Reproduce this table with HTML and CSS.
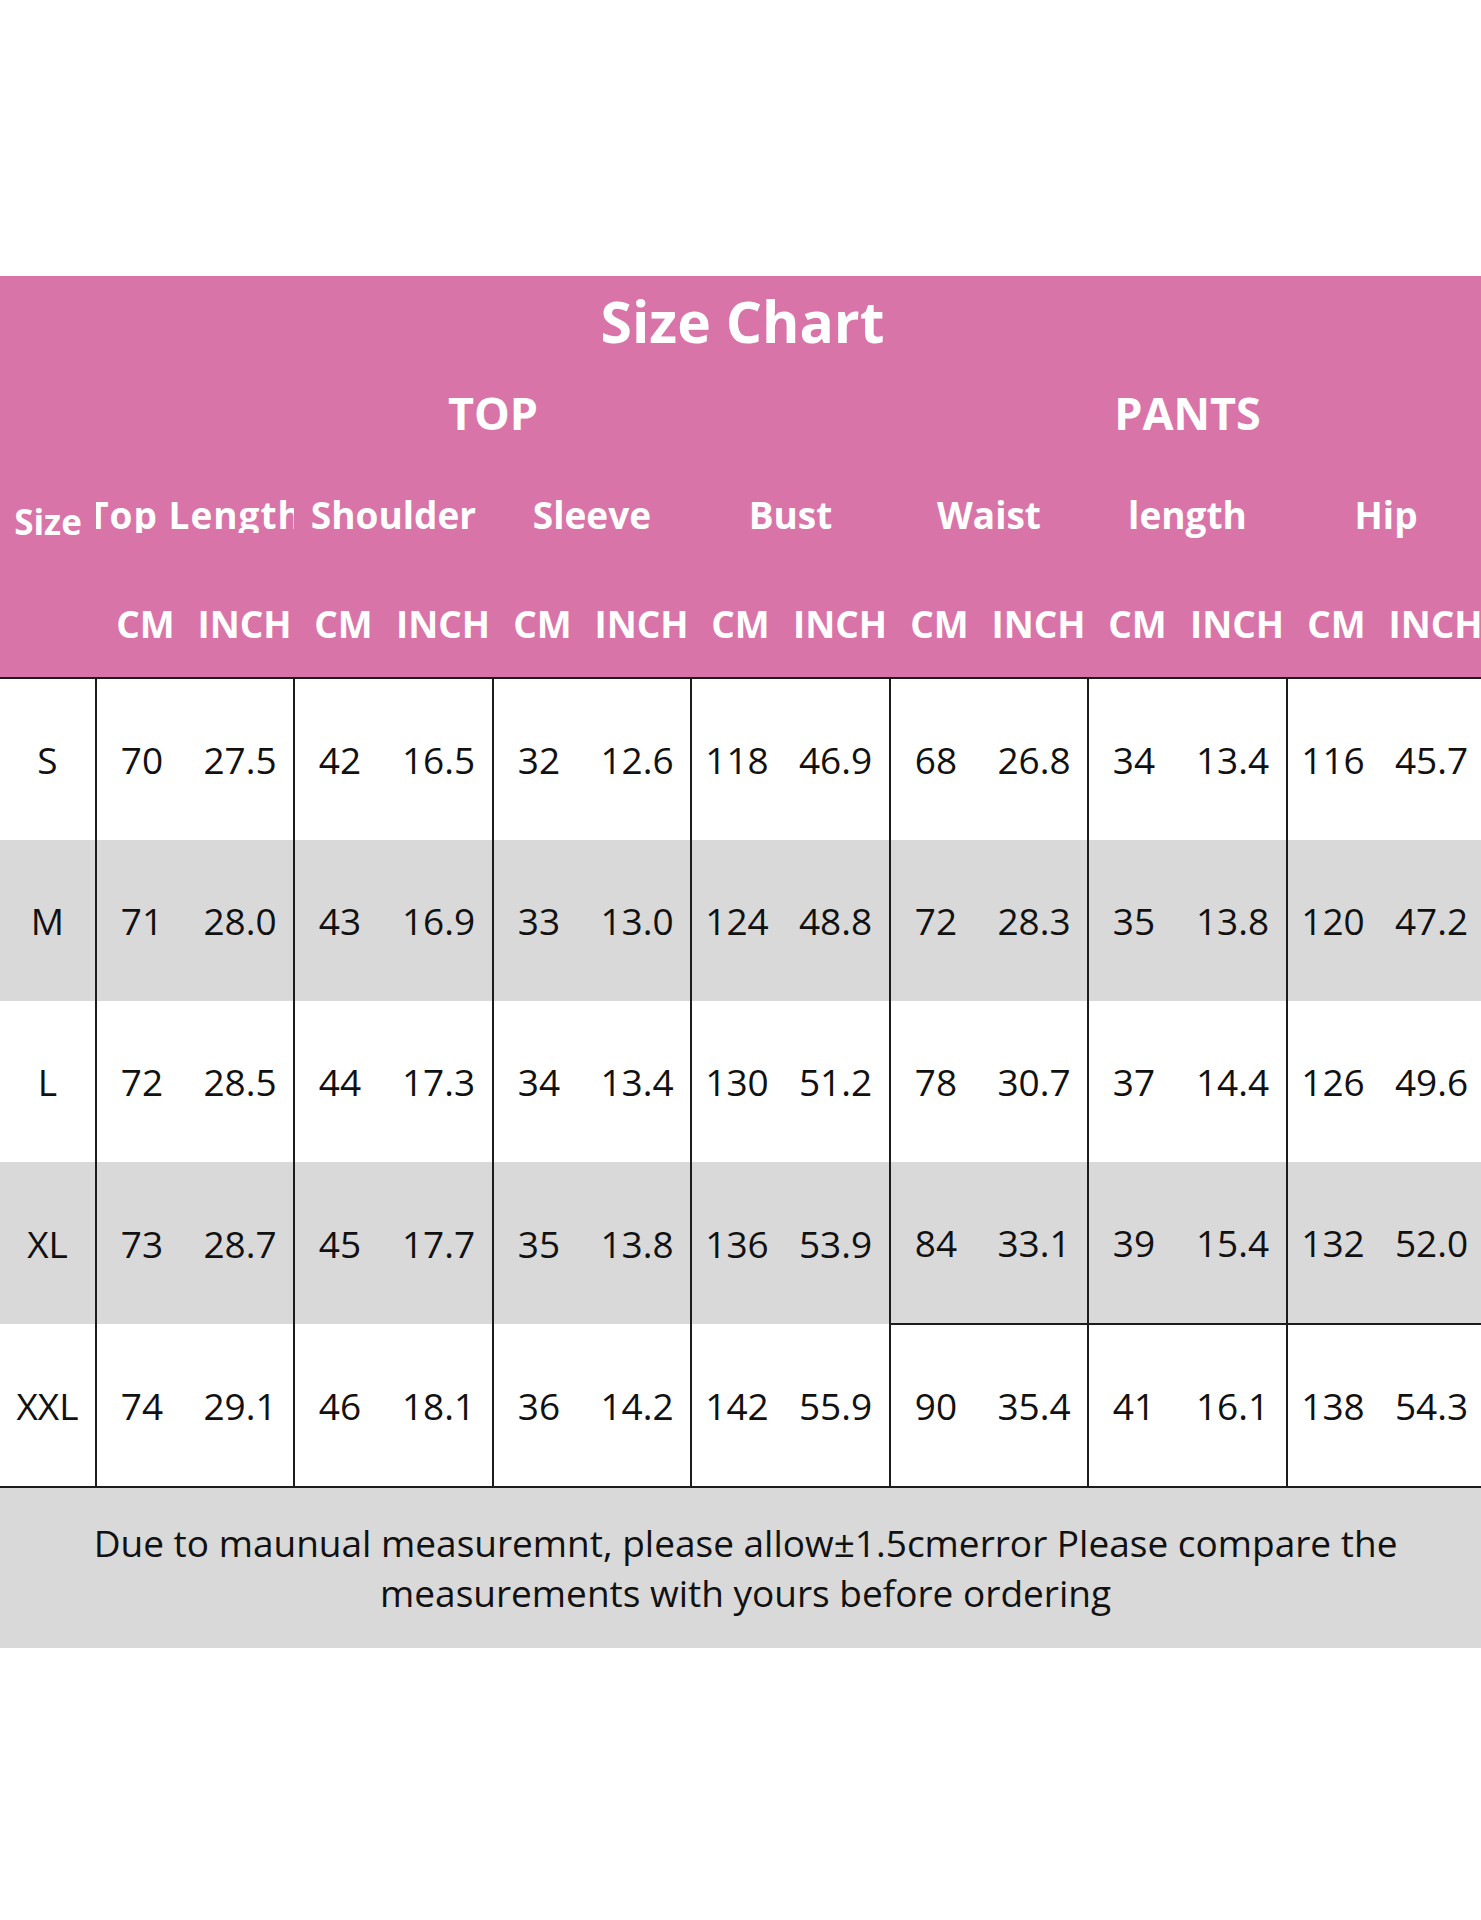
FILE: index.html
```html
<!DOCTYPE html>
<html lang="en">
<head>
<meta charset="utf-8">
<title>Size Chart</title>
<link rel="stylesheet" href="styles.css">
</head>
<body>
<div class="sheet">
  <table class="chart">
    <colgroup>
      <col class="w-size">
      <col class="w99"><col class="w99">
      <col class="w99"><col class="w100">
      <col class="w99"><col class="w99">
      <col class="w99"><col class="w100">
      <col class="w99"><col class="w99">
      <col class="w99"><col class="w100">
      <col class="w99"><col class="w99">
    </colgroup>
    <tbody class="head">
      <tr class="r-title"><td colspan="15">Size Chart</td></tr>
      <tr class="r-group"><td></td><td colspan="8">TOP</td><td colspan="6">PANTS</td></tr>
      <tr class="r-label">
        <td class="size-label">Size</td>
        <td colspan="2"><div class="clip"><span>Top Length</span></div></td>
        <td colspan="2">Shoulder</td>
        <td colspan="2">Sleeve</td>
        <td colspan="2">Bust</td>
        <td colspan="2">Waist</td>
        <td colspan="2">length</td>
        <td colspan="2">Hip</td>
      </tr>
      <tr class="r-unit">
        <td></td>
        <td>CM</td><td>INCH</td><td>CM</td><td>INCH</td><td>CM</td><td>INCH</td><td>CM</td><td>INCH</td>
        <td>CM</td><td>INCH</td><td>CM</td><td>INCH</td><td>CM</td><td>INCH</td>
      </tr>
    </tbody>
    <tbody class="data">
      <tr class="r-data first">
        <td>S</td>
        <td class="g">70</td><td>27.5</td><td class="g">42</td><td>16.5</td><td class="g">32</td><td>12.6</td><td class="g">118</td><td>46.9</td>
        <td class="g">68</td><td>26.8</td><td class="g">34</td><td>13.4</td><td class="g">116</td><td>45.7</td>
      </tr>
      <tr class="r-data alt">
        <td>M</td>
        <td class="g">71</td><td>28.0</td><td class="g">43</td><td>16.9</td><td class="g">33</td><td>13.0</td><td class="g">124</td><td>48.8</td>
        <td class="g">72</td><td>28.3</td><td class="g">35</td><td>13.8</td><td class="g">120</td><td>47.2</td>
      </tr>
      <tr class="r-data">
        <td>L</td>
        <td class="g">72</td><td>28.5</td><td class="g">44</td><td>17.3</td><td class="g">34</td><td>13.4</td><td class="g">130</td><td>51.2</td>
        <td class="g">78</td><td>30.7</td><td class="g">37</td><td>14.4</td><td class="g">126</td><td>49.6</td>
      </tr>
      <tr class="r-data alt">
        <td>XL</td>
        <td class="g">73</td><td>28.7</td><td class="g">45</td><td>17.7</td><td class="g">35</td><td>13.8</td><td class="g">136</td><td>53.9</td>
        <td class="g pb">84</td><td class="pb">33.1</td><td class="g pb">39</td><td class="pb">15.4</td><td class="g pb">132</td><td class="pb">52.0</td>
      </tr>
      <tr class="r-data last">
        <td>XXL</td>
        <td class="g">74</td><td>29.1</td><td class="g">46</td><td>18.1</td><td class="g">36</td><td>14.2</td><td class="g">142</td><td>55.9</td>
        <td class="g">90</td><td>35.4</td><td class="g">41</td><td>16.1</td><td class="g">138</td><td>54.3</td>
      </tr>
    </tbody>
    <tbody class="foot">
      <tr class="r-note">
        <td colspan="15"><div class="note">Due to maunual measuremnt, please allow±1.5cmerror Please compare the<br>measurements with yours before ordering</div></td>
      </tr>
    </tbody>
  </table>
</div>
</body>
</html>
```

FILE: styles.css
```css
html, body {
  margin: 0;
  padding: 0;
  background: #ffffff;
}

body {
  font-family: "Open Sans", "Noto Sans", sans-serif;
}

.sheet {
  width: 1481px;
  overflow: hidden;
  padding-top: 276px;
  padding-bottom: 272px;
}

.chart {
  width: 1485px;
  table-layout: fixed;
  border-collapse: collapse;
  border-spacing: 0;
}

.w-size { width: 96px; }
.w99 { width: 99px; }
.w100 { width: 100px; }

.chart td {
  padding: 0;
  text-align: center;
  vertical-align: middle;
  white-space: nowrap;
  line-height: 1;
}

/* header */
.head td {
  background: #d974a8;
  color: #ffffff;
  font-weight: 700;
}

.r-title td {
  height: 90px;
  font-size: 57px;
}

.r-group td {
  height: 92px;
  font-size: 45px;
}

.r-label td {
  height: 112px;
  font-size: 37px;
}

.r-label td.size-label {
  font-size: 35px;
  padding-top: 15px;
  box-sizing: border-box;
}

.clip {
  display: flex;
  justify-content: center;
  overflow: hidden;
  width: 100%;
}

.clip span {
  flex: none;
  letter-spacing: 1px;
}

.r-unit td {
  height: 107px;
  font-size: 37px;
}

/* data */
.r-data td {
  height: 161px;
  font-size: 37px;
  color: #111111;
  background: #ffffff;
  padding-right: 8px;
}

.r-data td:first-child {
  padding-right: 0;
}

.r-data.alt td {
  background: #d9d9d9;
}

.r-data td.g {
  border-left: 2px solid #1c1c1c;
}

.r-data.first td {
  border-top: 2px solid #1c1c1c;
}

.r-data.last td {
  border-bottom: 2px solid #1c1c1c;
}

.r-data td.pb {
  border-bottom: 2px solid #1c1c1c;
}

/* footer */
.r-note td {
  height: 160px;
  background: #d9d9d9;
  color: #111111;
}

.note {
  font-size: 37px;
  line-height: 50px;
  padding-left: 6px;
}
```
